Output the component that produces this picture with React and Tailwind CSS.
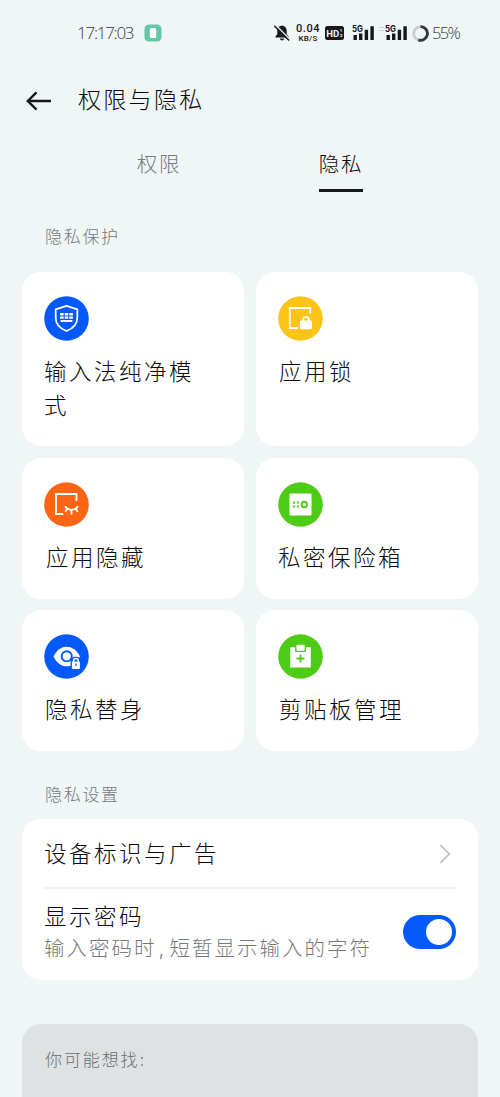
import { useState } from 'react'

const Shield = () => (
  <svg viewBox="0 0 45 45" className="size-[45px]">
    <circle cx="22.5" cy="22.5" r="22.3" fill="#0459fd" />
    <path d="M22.5 9.8 33.3 13.4V21.5C33.3 28 29 32.6 22.5 35 16 32.6 11.7 28 11.7 21.5V13.4Z" fill="none" stroke="#fff" strokeWidth="1.8" strokeLinejoin="round" />
    <path d="M16.1 17h3.6v2.4h-3.6zM20.7 17h3.6v2.4h-3.6zM25.3 17h3.6v2.4h-3.6zM16.1 20.4h3.6v2.4h-3.6zM20.7 20.4h3.6v2.4h-3.6zM25.3 20.4h3.6v2.4h-3.6zM16.6 23.9h11.8v2H16.6z" fill="#fff" />
  </svg>
)

const AppLock = () => (
  <svg viewBox="0 0 45 45" className="size-[45px]">
    <circle cx="22.5" cy="22.5" r="22.3" fill="#fcc419" />
    <path d="M32.2 17.5V12H11.8v20H20" fill="none" stroke="#fff" strokeWidth="1.8" />
    <rect x="22" y="24.6" width="12" height="8.6" rx="1.4" fill="#fff" />
    <path d="M25.2 25v-1.3a2.8 2.8 0 0 1 5.6 0V25" fill="none" stroke="#fff" strokeWidth="1.7" />
  </svg>
)

const AppHide = () => (
  <svg viewBox="0 0 45 45" className="size-[45px]">
    <circle cx="22.5" cy="22.5" r="22.3" fill="#fb6514" />
    <path d="M32.5 19V12H12v20H19.3" fill="none" stroke="#fff" strokeWidth="1.8" />
    <path d="M21 24.3c3 4.7 10 4.7 13 0M23.3 27l-2.2 2.8M27.5 28v4.6M31.7 27l2.2 2.8" fill="none" stroke="#fff" strokeWidth="1.8" />
  </svg>
)

const Safe = () => (
  <svg viewBox="0 0 45 45" className="size-[45px]">
    <circle cx="22.5" cy="22.5" r="22.3" fill="#4ecb17" />
    <rect x="11.5" y="11.5" width="22" height="22" rx="1.2" fill="#fff" />
    <path d="M15 19.4h2v2h-2zM18.9 19.4h2v2h-2zM15 23.5h2v2h-2zM18.9 23.5h2v2h-2z" fill="#4ecb17" />
    <circle cx="26.3" cy="22.5" r="2.7" fill="none" stroke="#4ecb17" strokeWidth="1.9" />
  </svg>
)

const EyeLock = () => (
  <svg viewBox="0 0 45 45" className="size-[45px]">
    <circle cx="22.5" cy="22.5" r="22.3" fill="#0459fd" />
    <path d="M9.5 22.5C12.7 16 17.3 12.7 22.6 12.7S32.8 16 36 22.5C32.8 29 28 32.3 22.6 32.3S12.7 29 9.5 22.5Z" fill="#fff" />
    <circle cx="22.7" cy="22.3" r="5.1" fill="none" stroke="#0459fd" strokeWidth="1.9" />
    <path d="M26.6 36.5V27.5C26.6 23.8 29 22.8 31.8 22.8S37 24 37 27.5V36.5Z" fill="#0459fd" />
    <rect x="27.9" y="27.6" width="8" height="7.5" rx="1" fill="#fff" />
    <path d="M29.5 28v-1.1a2.4 2.4 0 0 1 4.8 0V28" fill="none" stroke="#fff" strokeWidth="1.4" />
    <path d="M31.3 29.6h1.2v2.4h-1.2z" fill="#0459fd" />
  </svg>
)

const Clipboard = () => (
  <svg viewBox="0 0 45 45" className="size-[45px]">
    <circle cx="22.5" cy="22.5" r="22.3" fill="#4ecb17" />
    <path d="M12.8 13.3h4.3V18h10.8v-4.7h4.3a.6.6 0 0 1 .6.6v19a.6.6 0 0 1-.6.6H12.8a.6.6 0 0 1-.6-.6v-19a.6.6 0 0 1 .6-.6Z" fill="#fff" />
    <rect x="18.4" y="10.8" width="8.2" height="5.9" rx="0.7" fill="#fff" />
    <path d="M22.5 20.5v8M18.5 24.5h8" stroke="#4ecb17" strokeWidth="1.8" />
  </svg>
)

const Signal = () => (
  <svg viewBox="0 -3 23 23" className="size-[23px]">
    <text x="0" y="7.3" fontSize="9" fontWeight="700" textLength="11" lengthAdjust="spacingAndGlyphs" fill="#15181a">5G</text>
    <path d="M1.5 10h3.4v5H1.5zM7 8.5h3.4V15H7zM12.7 4.7h3.4V15h-3.4zM18.4 1.3h3.4V15h-3.4z" fill="#15181a" />
  </svg>
)

const cards = [
  { label: '输入法纯净模式', icon: Shield, box: 'h-[174px]', text: 'pl-0' },
  { label: '应用锁', icon: AppLock, box: 'h-[174px]', text: 'pl-px' },
  { label: '应用隐藏', icon: AppHide, box: 'h-[141px]', text: 'pl-0.5' },
  { label: '私密保险箱', icon: Safe, box: 'h-[141px]', text: 'pl-0' },
  { label: '隐私替身', icon: EyeLock, box: 'h-[141px]', text: 'pl-px' },
  { label: '剪贴板管理', icon: Clipboard, box: 'h-[141px]', text: 'pl-px' },
]

function StatusBar() {
  return (
    <div className="flex h-[66px] items-center pl-[77px] text-[#34383a]">
      <span className="w-[58px] whitespace-nowrap font-['Open_Sans','Noto_Sans',sans-serif] text-[17px] font-light tracking-[-1.25px]">17:17:03</span>
      <svg viewBox="0 0 18 18" className="ml-[9px] size-[18px]">
        <rect x="0.5" y="0.5" width="17" height="17" rx="4.5" fill="#64c6a5" />
        <rect x="5.8" y="4" width="6.4" height="10" rx="1.5" fill="#fff" />
      </svg>
      <svg viewBox="0 0 18 18" className="ml-[111px] size-[18px]">
        <path d="M9 1.5c-3.2.5-4.7 2.6-4.7 5.3v3.4L2.4 12.6v1h13.2v-1l-1.9-2.4V6.8c0-2.7-1.5-4.8-4.7-5.3ZM7 14.5h4a2 2 0 0 1-4 0Z" fill="#15181a" />
        <path d="m2.8 1.2 14.5 14.5" stroke="#f0f5f6" strokeWidth="1.4" />
        <path d="m1.3 1.8 14.8 14.7" stroke="#15181a" strokeWidth="1.5" />
      </svg>
      <div className="ml-[4px] flex w-[26px] flex-col items-center font-['Roboto',sans-serif] text-[#15181a]">
        <span className="text-[11px] leading-[11px] font-medium tracking-[0.6px]">0.04</span>
        <span className="text-[8px] leading-[9px] font-medium tracking-[0.2px]">KB/S</span>
      </div>
      <svg viewBox="0 0 19 14" className="ml-[4px] h-[14px] w-[19px]">
        <rect width="19" height="14" rx="2.5" fill="#15181a" />
        <text x="1.2" y="10.5" fontSize="9.5" fontWeight="700" className="font-['Roboto',sans-serif]" fill="#f0f5f6">HD</text>
        <text x="14.9" y="6.2" fontSize="4" fontWeight="700" fill="#f0f5f6">1</text>
        <text x="14.9" y="11.4" fontSize="4" fontWeight="700" fill="#f0f5f6">2</text>
      </svg>
      <div className="ml-[8px]"><Signal /></div>
      <svg viewBox="0 0 5 8" className="mb-[8px] ml-[4px] h-2 w-[5px]">
        <path d="M0 2.5h5M0 5.5h5" stroke="#cdd1d2" strokeWidth="1.2" />
      </svg>
      <div className="ml-px"><Signal /></div>
      <svg viewBox="0 0 17 17" className="ml-[4px] size-[17px]">
        <circle cx="8.5" cy="8.5" r="6.8" fill="none" stroke="#c9cdce" strokeWidth="2.8" />
        <path d="M8.5 1.7a6.8 6.8 0 1 1-2.1 13.2" fill="none" stroke="#34383a" strokeWidth="2.8" />
      </svg>
      <span className="ml-[3px] whitespace-nowrap font-['Open_Sans','Noto_Sans',sans-serif] text-[16.5px] font-light tracking-[-1.7px]">55%</span>
    </div>
  )
}

export default function App() {
  const [showPassword, setShowPassword] = useState(true)

  return (
    <div className="flex h-[1097px] w-[500px] flex-col overflow-hidden bg-[#f0f5f6] font-['Inter','Noto_Sans_CJK_SC',sans-serif] font-light text-[#08090a]">
      <StatusBar />

      <header className="flex h-[68px] items-center pl-[26px]">
        <svg viewBox="0 0 26 20" className="mt-px h-5 w-[26px]" fill="none" stroke="#15181a" strokeWidth="2.4">
          <path d="M25 10H2M10.5 1.3 1.8 10l8.7 8.7" />
        </svg>
        <h1 className="ml-[26px] text-[23px] leading-[34px] font-light tracking-[2.3px]">权限与隐私</h1>
      </header>

      <nav className="grid h-[58px] grid-cols-2 px-[68px] text-[20.5px] leading-[36px] tracking-[1.7px]">
        <button className="flex justify-center pt-[13px] text-[#75797b]">
          <span className="h-[34px]">权限</span>
        </button>
        <button className="flex justify-center pt-[13px]">
          <span className="h-[45px] border-b-3 border-[#15181a] whitespace-nowrap">隐私</span>
        </button>
      </nav>

      <h2 className="flex h-[80px] items-center pt-[12px] pl-[45px] text-[17px] tracking-[1.7px] text-[#75797b]">隐私保护</h2>

      <div className="grid grid-cols-2 gap-x-3 gap-y-[11.5px] px-[22px]">
        {cards.map(({ label, icon: Icon, box, text }) => (
          <div key={label} className={`rounded-[19px] bg-white pt-6 pl-[22px] ${box}`}>
            <Icon />
            <p className={`mt-[14px] w-[160px] text-[22.5px] leading-[34px] tracking-[2.5px] ${text}`}>{label}</p>
          </div>
        ))}
      </div>

      <h2 className="flex h-[68px] items-center pt-[22px] pl-[45px] text-[17px] tracking-[1.7px] text-[#75797b]">隐私设置</h2>

      <section className="mx-[22px] h-[161px] shrink-0 rounded-[19px] bg-white px-[22px]">
        <div className="flex h-[70px] items-center justify-between border-b-2 border-[#f1f3f6]">
          <span className="pt-px text-[22.5px] tracking-[2.5px]">设备标识与广告</span>
          <svg viewBox="0 0 12 20" className="mt-0.5 mr-[5px] h-5 w-3" fill="none" stroke="#c5c8cb" strokeWidth="1.8">
            <path d="m1.3 1 9 9-9 9" />
          </svg>
        </div>
        <div className="flex h-[86px] items-center justify-between">
          <div className="whitespace-nowrap">
            <p className="text-[22.5px] leading-[31px] tracking-[2.5px]">显示密码</p>
            <p className="mt-px text-[20.5px] leading-[31px] tracking-[2px] text-[#75797b]">
              输入密码时<span className="inline-block w-[13px] pl-[2px]">,</span>短暂显示输入的字符
            </p>
          </div>
          <button
            role="switch"
            aria-checked={showPassword}
            onClick={() => setShowPassword(v => !v)}
            className={`flex h-[34px] w-[53px] shrink-0 items-center rounded-full px-1 ${showPassword ? 'justify-end bg-[#0459fd]' : 'justify-start bg-gray-300'}`}
          >
            <span className="size-[26px] rounded-full bg-white" />
          </button>
        </div>
      </section>

      <section className="mx-[22px] mt-11 flex-1 rounded-t-[19px] bg-[#dee2e3] pt-[23px] pl-[23px]">
        <p className="text-[17px] leading-[26px] tracking-[1.9px] text-[#6b6f71]">你可能想找:</p>
      </section>
    </div>
  )
}
